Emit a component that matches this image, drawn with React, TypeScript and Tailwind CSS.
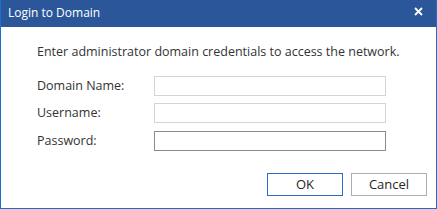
import React from "react";

export default function App() {
  const font = { fontFamily: '"Segoe UI", "Open Sans", "Noto Sans", sans-serif' };
  return (
    <div className="w-[437px] h-[209px] bg-white" style={font}>
      <div className="w-full h-full flex flex-col border-x border-b border-[#1a6fcf] box-border">
        <div className="h-[27px] bg-[#2b579a] flex items-center justify-between pl-[7px] pr-[13px] shrink-0">
          <span className="text-white text-[12px] leading-[16px] mt-[-2px]">Login to Domain</span>
          <svg width="9" height="9" viewBox="0 0 9 9" className="mt-[-5px]">
            <path d="M1 1 L8 8 M8 1 L1 8" stroke="white" strokeWidth="1.8" />
          </svg>
        </div>
        <div className="flex-1 flex flex-col pl-[36px] pr-[9px]">
          <div className="mt-[16px] text-[12.5px] leading-[18px] text-[#333333]">
            Enter administrator domain credentials to access the network.
          </div>
          <div className="mt-[15px] flex flex-col">
            <div className="flex items-center h-[20px]">
              <span className="w-[117px] text-[12.5px] text-[#333333]">Domain Name:</span>
              <div className="w-[232px] h-[20px] border border-[#d4d4d4]" />
            </div>
            <div className="flex items-center h-[20px] mt-[7px]">
              <span className="w-[117px] text-[12.5px] text-[#333333]">Username:</span>
              <div className="w-[232px] h-[20px] border border-[#d4d4d4]" />
            </div>
            <div className="flex items-center h-[20px] mt-[8px]">
              <span className="w-[117px] text-[12.5px] text-[#333333]">Password:</span>
              <div className="w-[232px] h-[20px] border border-[#8a8a8a]" />
            </div>
          </div>
          <div className="mt-[22px] flex justify-end gap-[8px]">
            <button className="w-[76px] h-[23px] border border-[#2b6cc4] bg-white text-[13px] text-[#262626] leading-none">
              OK
            </button>
            <button className="w-[76px] h-[23px] border border-[#adadad] bg-white text-[13px] text-[#262626] leading-none">
              Cancel
            </button>
          </div>
        </div>
      </div>
    </div>
  );
}
